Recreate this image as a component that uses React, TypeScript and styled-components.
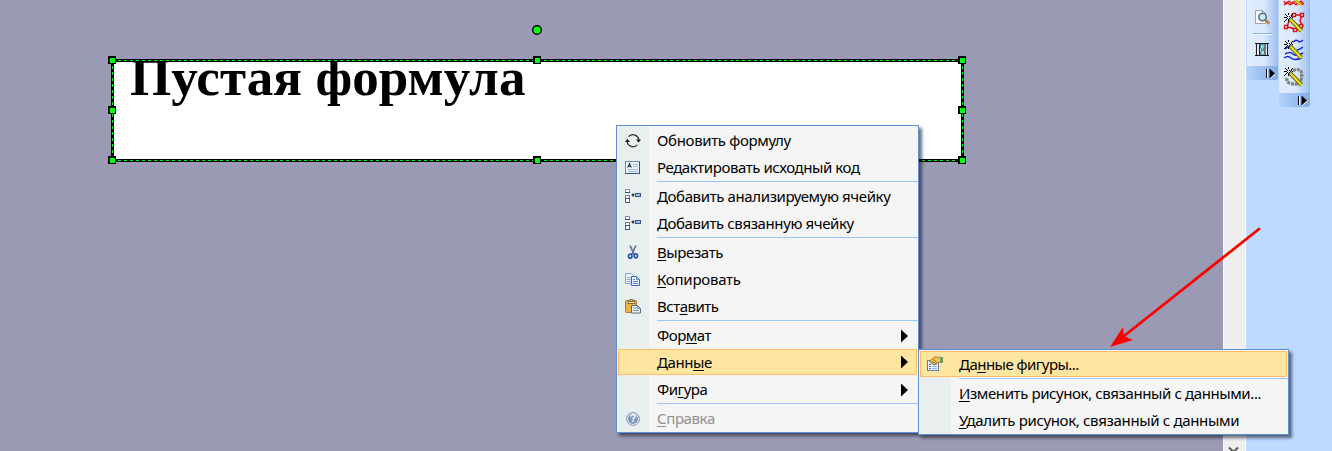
import React from "react";
import styled, { createGlobalStyle } from "styled-components";

const GlobalStyle = createGlobalStyle`
  * { box-sizing: border-box; }
  html, body { margin: 0; padding: 0; overflow: hidden; background: #9b9ab4; }
`;

const Window = styled.div`
  position: relative;
  display: flex;
  width: 1332px;
  height: 451px;
  overflow: hidden;
  font-family: "Noto Sans", "Open Sans", sans-serif;
`;

const Canvas = styled.main`
  position: relative;
  flex: 1;
  background: #9b9ab4;
`;

const ScrollTrack = styled.div`
  display: flex;
  align-items: flex-end;
  justify-content: center;
  width: 23px;
  padding-right: 3px;
  background: #efefef;
  border-left: 1px solid #fbfbfb;
  border-right: 1px solid #fdfdfd;
`;

const Dock = styled.aside`
  display: flex;
  align-items: flex-start;
  gap: 1px;
  width: 86px;
  padding-left: 1px;
  background: #bedbff;
`;

const Toolbar = styled.div<{ $height: number }>`
  display: flex;
  flex-direction: column;
  width: 31px;
  height: ${(p) => p.$height}px;
  border-radius: 0 0 3px 3px;
  overflow: hidden;
  background: linear-gradient(90deg, #e1edff 0%, #d9e8fe 55%, #a5c5f3 94%, #8db5ec 100%);
`;

const ToolArea = styled.div`
  flex: 1;
  min-height: 0;
`;

const ToolbarCap = styled.div`
  display: flex;
  align-items: center;
  justify-content: flex-end;
  height: 14px;
  padding-right: 2px;
  background: linear-gradient(90deg, #b4d2fb, #82ade9);
`;

const Shape = styled.div`
  position: absolute;
  left: 112px;
  top: 60px;
  width: 851px;
  height: 101px;
  overflow: hidden;
  background: #fff;
`;

const ShapeText = styled.div`
  padding-left: 18px;
  margin-top: -13px;
  font: bold 53px/60px "Liberation Serif", serif;
  letter-spacing: 0.1px;
  white-space: nowrap;
  color: #000;
`;

const Overlay = styled.svg`
  position: absolute;
  left: 0;
  top: 0;
  pointer-events: none;
`;

const Menu = styled.div<{ $x: number; $y: number; $w: number }>`
  position: absolute;
  left: ${(p) => p.$x}px;
  top: ${(p) => p.$y}px;
  width: ${(p) => p.$w}px;
  padding: 1px 0 0 1px;
  border: 1px solid #5c90d2;
  background: linear-gradient(90deg, #f0f4f4 0 1px, #e9eeee 1px 32px, #f5f5f5 32px);
  box-shadow: 3px 3px 3px rgba(20, 20, 40, 0.6);
`;

const Item = styled.div<{ $active?: boolean; $disabled?: boolean }>`
  display: flex;
  align-items: center;
  height: ${(p) => (p.$active ? 26 : 27)}px;
  margin: 0 1px ${(p) => (p.$active ? 1 : 0)}px 0;
  padding-right: 9px;
  font-size: 15px;
  white-space: nowrap;
  color: ${(p) => (p.$disabled ? "#919191" : "#000")};
  background: ${(p) => (p.$active ? "#ffe6a0" : "transparent")};
  box-shadow: ${(p) => (p.$active ? "inset 0 0 0 1px #ffbd69" : "none")};
`;

const IconSlot = styled.span`
  display: flex;
  justify-content: center;
  width: 30px;
  margin-right: 9px;
`;

const Label = styled.span<{ $spacing: number }>`
  flex: 1;
  align-self: flex-start;
  line-height: 26px;
  letter-spacing: ${(p) => p.$spacing}px;
  u {
    text-decoration-thickness: 1px;
    text-underline-offset: 2px;
    text-decoration-skip-ink: none;
  }
`;

const Separator = styled.div`
  height: 2px;
  margin-left: 39px;
  border-top: 1px solid #9ac6ff;
`;

const Svg16 = ({ children }: { children: React.ReactNode }) => (
  <svg width="16" height="16" viewBox="0 0 16 16">{children}</svg>
);

const RefreshIcon = () => (
  <Svg16>
    <path d="M3.6 3.6A6 6 0 0 1 13.9 7M12.4 11.9A6 6 0 0 1 2.1 8.5" fill="none" stroke="#333" strokeWidth="1.3" />
    <path d="M11 6.4h5L13.6 9.8zM0 9h5L2.4 5.7z" fill="#222" />
  </Svg16>
);

const EditIcon = () => (
  <Svg16>
    <rect x=".5" y="1.5" width="14" height="12" fill="#eef5ff" stroke="#6d8cb6" />
    <path d="M0 13.5h15M14.5 2v12" stroke="#35547f" />
    <path d="M2.7 7.5 4.5 3.5l1.8 4M3.3 6.2h2.4" fill="none" stroke="#234" strokeWidth="1.1" />
    <path d="M8 4.5h5M8 6.5h5M3 9.5h10M3 11.5h10" stroke="#9dbbe2" />
  </Svg16>
);

const AddCellIcon = () => (
  <Svg16>
    <rect x=".5" y=".5" width="4" height="3" fill="#fff" stroke="#8590a5" />
    <rect x=".5" y="6.5" width="4" height="3" fill="#fff" stroke="#6f80a0" />
    <rect x=".5" y="9.5" width="4" height="4" fill="#fff" stroke="#55698e" />
    <path d="M0 3.5h5M0 9.5h5M0 13.5h5" stroke="#355083" />
    <path d="M6.5 6h3M8 4.5v3" stroke="#111" strokeWidth="1.2" />
    <rect x="10.5" y="4.5" width="5" height="3" fill="#9dbff0" stroke="#34578f" />
  </Svg16>
);

const CutIcon = () => (
  <Svg16>
    <path d="M5 .5 9.2 9.5M10.8.5 6.8 9.5" stroke="#5f7590" strokeWidth="1.7" />
    <ellipse cx="5.2" cy="11.2" rx="1.7" ry="2" fill="none" stroke="#3058b0" strokeWidth="1.7" />
    <ellipse cx="10.8" cy="10.8" rx="1.7" ry="2" fill="none" stroke="#3058b0" strokeWidth="1.7" />
  </Svg16>
);

const CopyIcon = () => (
  <Svg16>
    <path d="M.5 1.5h6l3 3v7h-9z" fill="#edf5ff" stroke="#85a6df" />
    <path d="M2 5.5h4M2 7.5h4M2 9.5h4" stroke="#88a9dd" />
    <path d="M6.5 4.5h5l3 3v6h-8z" fill="#eaf3ff" stroke="#4269b2" />
    <path d="M11.5 4.5v3h3M8 7.5h2M8 9.5h5M8 11.5h5" fill="none" stroke="#618bd0" />
  </Svg16>
);

const PasteIcon = () => (
  <Svg16>
    <rect x=".5" y="1.5" width="11" height="12" rx="1" fill="#edb441" stroke="#b27a27" />
    <path d="M3 2.5h7v2H3z" fill="#fff1b8" stroke="#8d6a3c" />
    <path d="M5 .5h3v2H5z" fill="#f5d26b" stroke="#8d6a3c" />
    <path d="M6.5 6.5h6l3 3v4.5h-9z" fill="#edf3fb" stroke="#596b8c" />
    <path d="M8 9h4M8 11.5h6M12.5 6.5v3h3" fill="none" stroke="#8193b5" />
  </Svg16>
);

const HelpGlyph = styled.span`
  display: flex;
  align-items: center;
  justify-content: center;
  width: 14px;
  height: 14px;
  border: 1px solid #9aa9c6;
  border-radius: 50%;
  box-shadow: inset 0 0 0 1px #e3e9f4;
  background: #8497bd;
  color: #fff;
  font: bold 10px/12px "Liberation Sans", sans-serif;
`;

const PropertiesIcon = () => (
  <Svg16>
    <rect x=".5" y="4.5" width="11" height="10" fill="#eef4ff" stroke="#627aa8" />
    <path d="M2 8.5h2M2 10.5h2M2 12.5h2" stroke="#3c73cc" />
    <path d="M5 8.5h5M5 10.5h5M5 12.5h5" stroke="#9eafd0" />
    <path d="M2 5.5 5 3l2-2 7 .2V6l-3 .5L8 9 4 7z" fill="#efc153" stroke="#967232" strokeWidth=".8" />
    <path d="m4 5 5 3M6 3l4 4" stroke="#79603a" strokeWidth=".8" />
    <path d="M13.5 1H16v6h-2.5z" fill="#579d65" />
  </Svg16>
);

const SubmenuArrow = () => (
  <svg width="7" height="14" viewBox="0 0 7 14"><path d="M0 .5v13L7 7z" fill="#000" /></svg>
);

const CapMark = () => (
  <svg width="11" height="11" viewBox="0 0 11 11">
    <path d="M2.5 1v9" stroke="#fff" /><path d="M1.5 1v9" stroke="#000" />
    <path d="M5 2v9L10.5 6z" fill="#fff" /><path d="M4.5 .5v10L10 5.5z" fill="#000" />
  </svg>
);

const sparkPixels = [
  [4, 0], [1, 1], [4, 1], [8, 1], [2, 2], [7, 2], [3, 3], [5, 3], [0, 4], [1, 4], [2, 4], [6, 4], [8, 4],
  [3, 5], [5, 5], [2, 6], [4, 6], [1, 7], [4, 7], [7, 3], [0, 8], [4, 8],
];

const Wand = ({ y }: { y: number }) => (
  <g transform={`translate(5 ${y})`}>
    <path d="m6 6 11.5 12" stroke="#6b6410" strokeWidth="4" />
    <path d="m6.5 6.5 11 11.5" stroke="#f0e51c" strokeWidth="2" />
    <g shapeRendering="crispEdges">
      {sparkPixels.map(([px, py], i) => (
        <rect key={i} x={px} y={py} width="1.4" height="1.4" fill="#000" />
      ))}
    </g>
  </g>
);

const PreviewTools = () => (
  <svg width="31" height="66">
    <path d="M8.5 10.5h7l3 3v10h-10z" fill="#fff" stroke="#97a8c2" />
    <path d="M15.5 10.5v3h3" fill="none" stroke="#8195b4" />
    <circle cx="15.5" cy="17" r="3.7" fill="#c6eaf5" stroke="#5f6f85" strokeWidth="1.6" />
    <path d="m18.5 20 3.7 3.7" stroke="#b97d3c" strokeWidth="2.8" />
    <path d="M6 33.5h19" stroke="#88b5f2" /><path d="M6 34.5h19" stroke="#eff6ff" />
    <path d="M10 44h10v11H10z" fill="#e9f3ff" />
    <path d="M9.5 43v13M20.5 43v13M12.5 43v13M18 43v13" stroke="#222" strokeWidth="1.1" />
    <path d="M8 43.5h14M8 55.5h14" stroke="#111" />
    <path d="M13 44v3l2 3-2 3v2h5v-2l-2-3 2-3v-3z" fill="#5fd9e0" stroke="#333" strokeWidth=".7" />
    <path d="M14.5 46v2M16 51v3" stroke="#fff" />
  </svg>
);

const InkTools = () => (
  <svg width="31" height="93">
    <path d="m5 1 2 3 3-3 3 3 3-3 3 3 3-3 3 3M5 5l3-3 3 3 3-3 3 3 3-3 4 3" fill="none" stroke="#e20b12" strokeWidth="1.2" />
    <path d="m16 0 6 5" stroke="#b9ab08" strokeWidth="2.5" />
    <path d="m16 0 6 5" stroke="#ffec22" strokeWidth="1" />
    <path d="M12 15h11l-2 6 3 5-3 2-5 3-3-3-5-1 2-6" fill="none" stroke="#e20b12" strokeWidth="1.4" />
    <path d="M13.5 13.5h3v3h-3zM21.5 13.5h3v3h-3zM5.5 25.5h3v3h-3zM14.5 28.5h3v3h-3zM20.5 24.5h3v3h-3z" fill="#fff" stroke="#e20b12" strokeWidth="1.3" />
    <Wand y={13} />
    <path d="M14 42q3-3 5-1t5-1M6 49q4-4 7 0t11-2M6 54q5-3 8 0t10-1M5 58q4-3 7 0t11 0" fill="none" stroke="#1427e7" strokeWidth="1.5" />
    <Wand y={40} />
    <path d="M14 70.500q7-3 9 3l-1 8q-5 4-10 2-5-1-4-6" fill="none" stroke="#818181" strokeWidth="3.2" strokeDasharray="3 .8" />
    <Wand y={67} />
  </svg>
);

const handles = [
  [108, 56], [533, 56], [958, 56], [108, 106], [958, 106], [108, 156], [533, 156], [958, 156],
];

const Selection = () => (
  <Overlay width="1223" height="200" shapeRendering="crispEdges">
    <rect x="112.5" y="60.5" width="850" height="100" fill="none" stroke="#000" strokeWidth="3" />
    <path d="M112 60.5h851M112 160.5h851M112.5 60v101M962.5 60v101" stroke="#00f51c" strokeDasharray="3 3" fill="none" />
    <path d="M537.5 36v20" stroke="#39d956" strokeDasharray="3 3" />
    {handles.map(([x, y]) => (
      <g key={`${x}-${y}`}>
        <rect x={x} y={y} width="8" height="8" fill="#000" />
        <rect x={x + 2} y={y + 2} width="5" height="5" fill="#00ff10" />
      </g>
    ))}
    <circle cx="537" cy="30" r="4.3" fill="#00ff10" stroke="#000" strokeWidth="1.4" shapeRendering="auto" />
  </Overlay>
);

type Entry = {
  icon?: React.ReactNode;
  text: React.ReactNode;
  sub?: boolean;
  active?: boolean;
  disabled?: boolean;
  rule?: boolean;
  spacing: number;
};

const mainItems: Entry[] = [
  { icon: <RefreshIcon />, text: "Обновить формулу", spacing: -0.34 },
  { icon: <EditIcon />, text: "Редактировать исходный код", rule: true, spacing: -0.43 },
  { icon: <AddCellIcon />, text: "Добавить анализируемую ячейку", spacing: -0.38 },
  { icon: <AddCellIcon />, text: "Добавить связанную ячейку", rule: true, spacing: -0.4 },
  { icon: <CutIcon />, text: <><u>В</u>ырезать</>, spacing: -0.4 },
  { icon: <CopyIcon />, text: <><u>К</u>опировать</>, spacing: -0.25 },
  { icon: <PasteIcon />, text: <>Вст<u>а</u>вить</>, rule: true, spacing: -0.5 },
  { text: <>Фор<u>м</u>ат</>, sub: true, spacing: -0.5 },
  { text: <>Данн<u>ы</u>е</>, sub: true, active: true, spacing: -0.4 },
  { text: <>Фи<u>г</u>ура</>, sub: true, rule: true, spacing: -0.5 },
  { icon: <HelpGlyph>?</HelpGlyph>, text: <><u>С</u>правка</>, disabled: true, spacing: -0.4 },
];

const dataItems: Entry[] = [
  { icon: <PropertiesIcon />, text: <>Да<u>н</u>ные фигуры...</>, active: true, rule: true, spacing: -0.54 },
  { text: <><u>И</u>зменить рисунок, связанный с данными...</>, spacing: -0.4 },
  { text: <><u>У</u>далить рисунок, связанный с данными</>, spacing: -0.34 },
];

const MenuItems = ({ items }: { items: Entry[] }) => (
  <>
    {items.map((item, i) => (
      <React.Fragment key={i}>
        <Item $active={item.active} $disabled={item.disabled}>
          <IconSlot>{item.icon}</IconSlot>
          <Label $spacing={item.spacing}>{item.text}</Label>
          {item.sub && <SubmenuArrow />}
        </Item>
        {item.rule && <Separator />}
      </React.Fragment>
    ))}
  </>
);

export default function App() {
  return (
    <Window>
      <GlobalStyle />
      <Canvas>
        <Shape><ShapeText>Пустая формула</ShapeText></Shape>
        <Selection />
      </Canvas>
      <ScrollTrack>
        <svg width="11" height="4" viewBox="0 0 11 4"><path d="m1 .5 4.5 4.5L10 .5" fill="none" stroke="#555" strokeWidth="2" /></svg>
      </ScrollTrack>
      <Dock>
        <Toolbar $height={80}><ToolArea><PreviewTools /></ToolArea><ToolbarCap><CapMark /></ToolbarCap></Toolbar>
        <Toolbar $height={107}><ToolArea><InkTools /></ToolArea><ToolbarCap><CapMark /></ToolbarCap></Toolbar>
      </Dock>
      <Menu $x={616} $y={125} $w={303}><MenuItems items={mainItems} /></Menu>
      <Menu $x={918} $y={349} $w={371}><MenuItems items={dataItems} /></Menu>
      <Overlay width="1332" height="451">
        <path d="M1259 229 1124 336" stroke="#fe0000" strokeWidth="2.8" strokeLinecap="round" />
        <path d="m1110 347 13-20 1 9 9 4z" fill="#fe0000" />
      </Overlay>
    </Window>
  );
}
